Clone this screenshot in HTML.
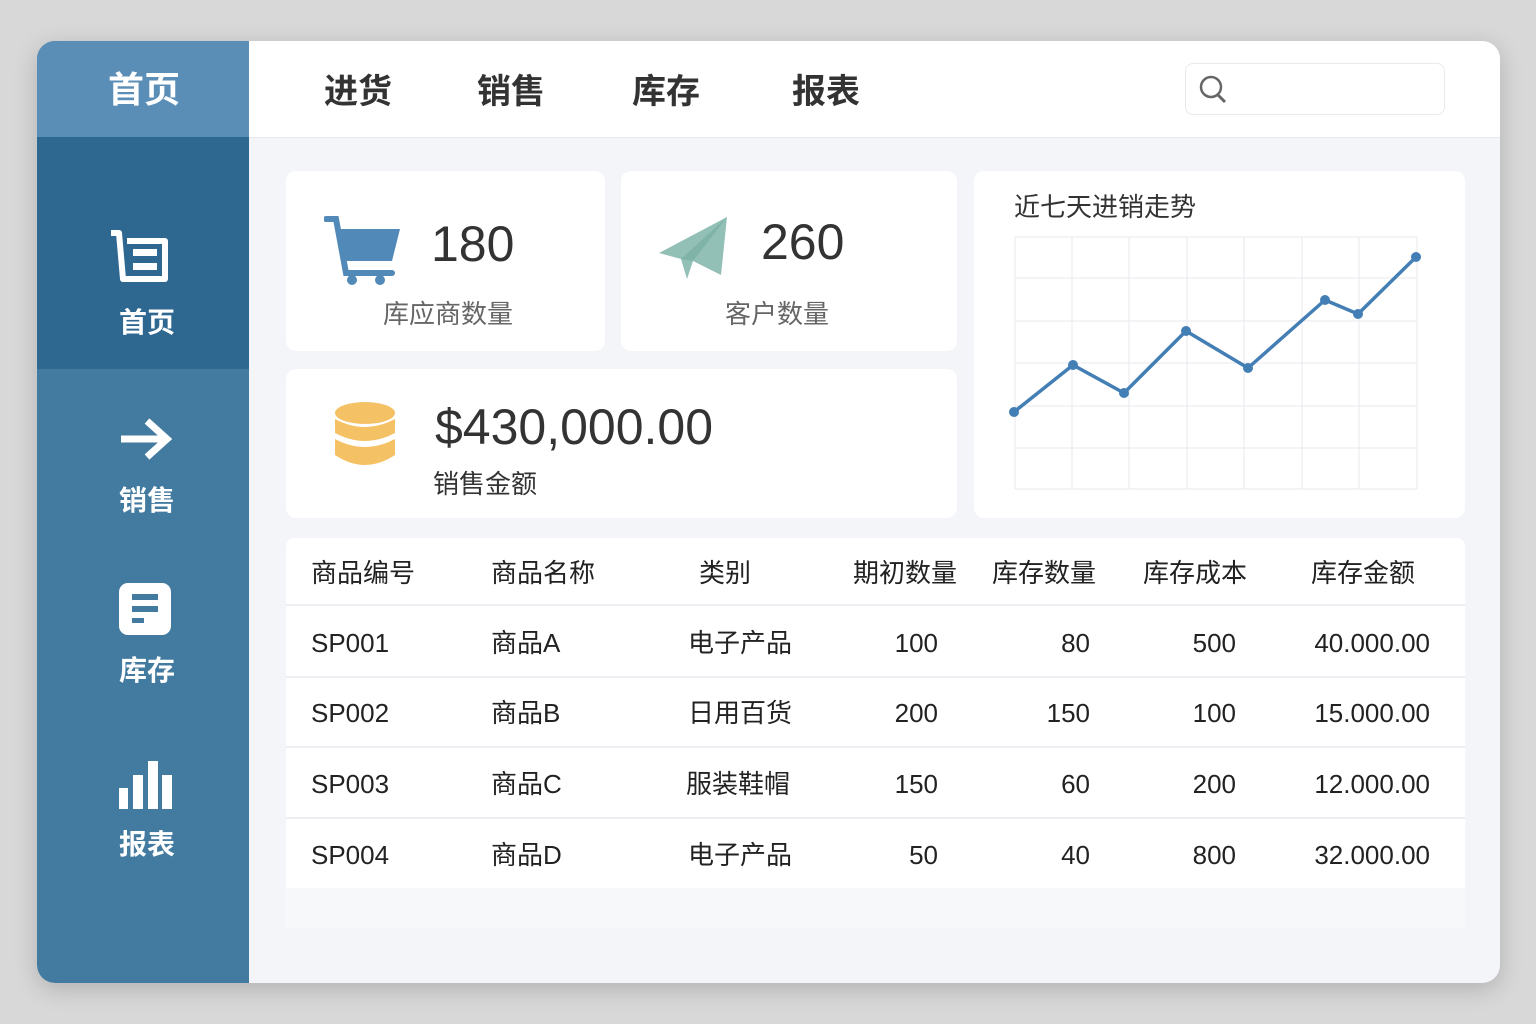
<!DOCTYPE html>
<html><head><meta charset="utf-8"><style>
*{margin:0;padding:0;box-sizing:border-box}
body{width:1536px;height:1024px;background:#d8d8d8;font-family:"Liberation Sans","Noto Sans CJK SC",sans-serif;position:relative;overflow:hidden}
.a{position:absolute}
.app{left:37px;top:41px;width:1463px;height:942px;border-radius:18px;background:#f3f5f8;overflow:hidden;box-shadow:0 6px 24px rgba(0,0,0,.18)}
.side{left:0;top:0;width:212px;height:942px;background:#437a9f}
.card{background:#fff;border-radius:10px}
.w{color:#fff;font-weight:bold;font-size:28px;text-align:center;width:212px;line-height:40px}
.nav{font-size:34px;color:#333;font-weight:bold;top:23px}
.t{font-size:26px;color:#222;line-height:36px;height:36px}
.r{text-align:right}
</style></head><body>
<div class="a app">
 <div class="a side"></div>
 <div class="a" style="left:0;top:0;width:212px;height:96px;background:#5a8eb7"></div>
 <div class="a" style="left:0;top:96px;width:212px;height:232px;background:#2e6790"></div>
 <div class="a w" style="left:1px;top:25px;font-size:36px;line-height:48px">首页</div>
 <svg class="a" style="left:70px;top:186px" width="66" height="58" viewBox="0 0 66 58"><path d="M4 6 H12 L16 52 H58 V14 H20" fill="none" stroke="#fff" stroke-width="6" stroke-linejoin="round"/><rect x="26" y="22" width="24" height="7" fill="#fff"/><rect x="26" y="36" width="24" height="7" fill="#fff"/></svg>
 <div class="a w" style="left:4px;top:262px">首页</div>
 <svg class="a" style="left:80px;top:374px" width="60" height="48" viewBox="0 0 60 48"><path d="M4 24 H48 M30 6 L50 24 L30 42" fill="none" stroke="#fff" stroke-width="7"/></svg>
 <div class="a w" style="left:4px;top:440px">销售</div>
 <svg class="a" style="left:82px;top:542px" width="52" height="52" viewBox="0 0 52 52"><rect x="0" y="0" width="52" height="52" rx="9" fill="#fff"/><rect x="13" y="11" width="26" height="6" fill="#437a9f"/><rect x="13" y="23" width="26" height="6" fill="#437a9f"/><rect x="13" y="35" width="12" height="5" fill="#437a9f"/></svg>
 <div class="a w" style="left:4px;top:610px">库存</div>
 <svg class="a" style="left:81px;top:720px" width="54" height="48" viewBox="0 0 54 48"><rect x="1" y="27" width="9" height="21" fill="#fff"/><rect x="15" y="14" width="10" height="34" fill="#fff"/><rect x="30" y="0" width="10" height="48" fill="#fff"/><rect x="44" y="14" width="10" height="34" fill="#fff"/></svg>
 <div class="a w" style="left:4px;top:784px">报表</div>

 <div class="a" style="left:212px;top:0;width:1251px;height:97px;background:#fff;border-bottom:1px solid #e6e9ec"></div>
 <div class="a nav" style="left:287px">进货</div>
 <div class="a nav" style="left:440px">销售</div>
 <div class="a nav" style="left:595px">库存</div>
 <div class="a nav" style="left:755px">报表</div>
 <div class="a" style="left:1148px;top:22px;width:260px;height:52px;border:1px solid #e8eaec;border-radius:8px;background:#fff"></div>
 <svg class="a" style="left:1162px;top:33px" width="30" height="32" viewBox="0 0 30 32"><circle cx="12" cy="13" r="10" fill="none" stroke="#666" stroke-width="2.5"/><path d="M19 21 L26 28" stroke="#666" stroke-width="3"/></svg>

 <div class="a card" style="left:249px;top:130px;width:319px;height:180px"></div>
 <svg class="a" style="left:287px;top:174px" width="80" height="72" viewBox="0 0 80 72"><path d="M2 4 H12 L22 58 H68" fill="none" stroke="#5189b8" stroke-width="6" stroke-linecap="round"/><path d="M14 14 H76 L68 46 H20 Z" fill="#5189b8"/><circle cx="28" cy="65" r="5" fill="#5189b8"/><circle cx="56" cy="65" r="5" fill="#5189b8"/></svg>
 <div class="a" style="left:394px;top:174px;font-size:50px;color:#333">180</div>
 <div class="a" style="left:346px;top:253px;font-size:26px;color:#666">库应商数量</div>

 <div class="a card" style="left:584px;top:130px;width:336px;height:180px"></div>
 <svg class="a" style="left:620px;top:174px" width="75" height="66" viewBox="0 0 75 66"><path d="M70 2 L2 38 L24 44 L30 64 L36 46 L64 60 Z" fill="#93c0b6"/><path d="M24 44 L70 2 L36 46" fill="#7fb3a8"/></svg>
 <div class="a" style="left:724px;top:172px;font-size:50px;color:#333">260</div>
 <div class="a" style="left:688px;top:253px;font-size:26px;color:#666">客户数量</div>

 <div class="a card" style="left:249px;top:328px;width:671px;height:149px"></div>
 <svg class="a" style="left:296px;top:360px" width="64" height="68" viewBox="0 0 64 68"><ellipse cx="32" cy="12" rx="30" ry="11" fill="#f5c165"/><path d="M2 18 Q32 34 62 18 V32 Q32 48 2 32 Z" fill="#f5c165"/><path d="M2 38 Q32 54 62 38 V54 Q32 74 2 54 Z" fill="#f5c165"/></svg>
 <div class="a" style="left:398px;top:357px;font-size:50px;color:#333">$430,000.00</div>
 <div class="a" style="left:396px;top:423px;font-size:26px;color:#333">销售金额</div>

 <div class="a card" style="left:937px;top:130px;width:491px;height:347px"></div>
 <div class="a" style="left:977px;top:146px;font-size:26px;color:#333">近七天进销走势</div>
 <svg class="a" style="left:937px;top:130px" width="491" height="347">
  <g stroke="#e8eaee" stroke-width="1">
   <path d="M41 66 V318 M98 66 V318 M155 66 V318 M213 66 V318 M270 66 V318 M328 66 V318 M385 66 V318 M443 66 V318"/>
   <path d="M41 66 H443 M41 107 H443 M41 150 H443 M41 192 H443 M41 235 H443 M41 277 H443 M41 318 H443"/>
  </g>
  <polyline points="40,241 99,194 150,222 212,160 274,197 351,129 384,143 442,86" fill="none" stroke="#437fb5" stroke-width="3.5" stroke-linejoin="round"/>
  <g fill="#437fb5"><circle cx="40" cy="241" r="5"/><circle cx="99" cy="194" r="5"/><circle cx="150" cy="222" r="5"/><circle cx="212" cy="160" r="5"/><circle cx="274" cy="197" r="5"/><circle cx="351" cy="129" r="5"/><circle cx="384" cy="143" r="5"/><circle cx="442" cy="86" r="5"/></g>
 </svg>

 <div class="a card" style="left:249px;top:497px;width:1179px;height:390px;border-radius:8px"></div>
 <div class="a" style="left:249px;top:563px;width:1179px;height:2px;background:#eceef1"></div>
 <div class="a" style="left:249px;top:635px;width:1179px;height:2px;background:#eceef1"></div>
 <div class="a" style="left:249px;top:705px;width:1179px;height:2px;background:#eceef1"></div>
 <div class="a" style="left:249px;top:776px;width:1179px;height:2px;background:#eceef1"></div>
 <div class="a" style="left:249px;top:847px;width:1179px;height:40px;background:#f6f8fa"></div>
 <div class="a t" style="left:274px;top:514px">商品编号</div>
 <div class="a t" style="left:454px;top:514px">商品名称</div>
 <div class="a t" style="left:662px;top:514px">类别</div>
 <div class="a t" style="left:816px;top:514px">期初数量</div>
 <div class="a t" style="left:955px;top:514px">库存数量</div>
 <div class="a t" style="left:1106px;top:514px">库存成本</div>
 <div class="a t" style="left:1274px;top:514px">库存金额</div>

 <div class="a t" style="left:274px;top:584px">SP001</div><div class="a t" style="left:454px;top:584px">商品A</div><div class="a t" style="left:651px;top:584px">电子产品</div>
 <div class="a t r" style="left:801px;width:100px;top:584px">100</div><div class="a t r" style="left:953px;width:100px;top:584px">80</div><div class="a t r" style="left:1099px;width:100px;top:584px">500</div><div class="a t r" style="left:1193px;width:200px;top:584px">40.000.00</div>

 <div class="a t" style="left:274px;top:654px">SP002</div><div class="a t" style="left:454px;top:654px">商品B</div><div class="a t" style="left:651px;top:654px">日用百货</div>
 <div class="a t r" style="left:801px;width:100px;top:654px">200</div><div class="a t r" style="left:953px;width:100px;top:654px">150</div><div class="a t r" style="left:1099px;width:100px;top:654px">100</div><div class="a t r" style="left:1193px;width:200px;top:654px">15.000.00</div>

 <div class="a t" style="left:274px;top:725px">SP003</div><div class="a t" style="left:454px;top:725px">商品C</div><div class="a t" style="left:649px;top:725px">服装鞋帽</div>
 <div class="a t r" style="left:801px;width:100px;top:725px">150</div><div class="a t r" style="left:953px;width:100px;top:725px">60</div><div class="a t r" style="left:1099px;width:100px;top:725px">200</div><div class="a t r" style="left:1193px;width:200px;top:725px">12.000.00</div>

 <div class="a t" style="left:274px;top:796px">SP004</div><div class="a t" style="left:454px;top:796px">商品D</div><div class="a t" style="left:651px;top:796px">电子产品</div>
 <div class="a t r" style="left:801px;width:100px;top:796px">50</div><div class="a t r" style="left:953px;width:100px;top:796px">40</div><div class="a t r" style="left:1099px;width:100px;top:796px">800</div><div class="a t r" style="left:1193px;width:200px;top:796px">32.000.00</div>
</div>
</body></html>
